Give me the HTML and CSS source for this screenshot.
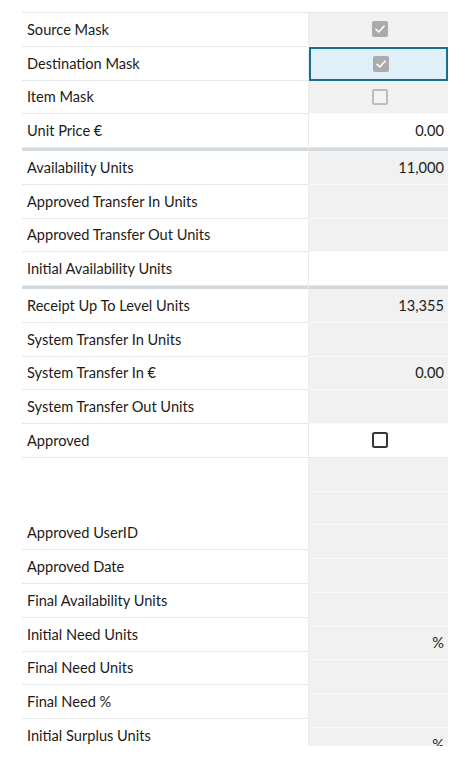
FILE: index.html
```html
<!DOCTYPE html>
<html>
<head>
<meta charset="utf-8">
<link rel="stylesheet" href="styles.css">
</head>
<body>
<div class="grid">
  <div class="col labels">
    <div class="row">Source Mask</div>
    <div class="row">Destination Mask</div>
    <div class="row">Item Mask</div>
    <div class="row">Unit Price €</div>
    <div class="sep"></div>
    <div class="row">Availability Units</div>
    <div class="row">Approved Transfer In Units</div>
    <div class="row">Approved Transfer Out Units</div>
    <div class="row">Initial Availability Units</div>
    <div class="sep"></div>
    <div class="row">Receipt Up To Level Units</div>
    <div class="row">System Transfer In Units</div>
    <div class="row">System Transfer In €</div>
    <div class="row">System Transfer Out Units</div>
    <div class="row">Approved</div>
    <div class="gap"></div>
    <div class="row">Approved UserID</div>
    <div class="row">Approved Date</div>
    <div class="row">Final Availability Units</div>
    <div class="row">Initial Need Units</div>
    <div class="row">Final Need Units</div>
    <div class="row">Final Need %</div>
    <div class="row">Initial Surplus Units</div>
  </div>
  <div class="col values">
    <div class="row cell ro center"><span class="cb checked"><svg viewBox="0 0 16 16" width="16" height="16"><path d="M4 8.3 L6.8 11 L12 5.2" fill="none" stroke="#fff" stroke-width="1.6" stroke-linecap="round" stroke-linejoin="round"/></svg></span></div>
    <div class="row cell selected center"><span class="cb checked"><svg viewBox="0 0 16 16" width="16" height="16"><path d="M4 8.3 L6.8 11 L12 5.2" fill="none" stroke="#fff" stroke-width="1.6" stroke-linecap="round" stroke-linejoin="round"/></svg></span></div>
    <div class="row cell ro center"><span class="cb disabled"></span></div>
    <div class="row cell edit">0.00</div>
    <div class="sep"></div>
    <div class="row cell ro">11,000</div>
    <div class="row cell ro"></div>
    <div class="row cell ro"></div>
    <div class="row cell edit"></div>
    <div class="sep"></div>
    <div class="row cell ro">13,355</div>
    <div class="row cell ro"></div>
    <div class="row cell ro">0.00</div>
    <div class="row cell ro"></div>
    <div class="row cell edit center"><span class="cb open"></span></div>
    <div class="row cell ro"></div>
    <div class="row cell ro"></div>
    <div class="row cell ro"></div>
    <div class="row cell ro"></div>
    <div class="row cell ro"></div>
    <div class="row cell ro">%</div>
    <div class="row cell ro"></div>
    <div class="row cell ro"></div>
    <div class="row cell ro">%</div>
  </div>
</div>
</body>
</html>
```
FILE: styles.css
```css
html, body {
  margin: 0;
  padding: 0;
  background: #ffffff;
}
body {
  font-family: Lato, "Noto Sans", sans-serif;
  font-size: 14.6px;
  color: #1c1b19;
}
.grid {
  display: flex;
  margin: 12px 0 0 22px;
  width: 426px;
  height: 733px;
  overflow: hidden;
  border-top: 1px solid #e8e8e8;
}
.col {
  display: flex;
  flex-direction: column;
  flex: none;
}
.labels {
  width: 286px;
}
.values {
  width: 140px;
  border-left: 1px solid #ebebeb;
  box-sizing: border-box;
}
.row {
  flex: none;
  height: 33.75px;
  box-sizing: border-box;
  border-bottom: 1px solid #e8e8e8;
  display: flex;
  align-items: center;
  padding: 0 5px;
  white-space: nowrap;
}
.cell {
  justify-content: flex-end;
  padding: 0 4px 0 4px;
}
.cell.center {
  justify-content: center;
}
.ro {
  background: #f1f1f1;
  border-bottom-color: #fafafa;
}
.edit {
  background: #ffffff;
}
.selected {
  background: #dff0f8;
  border: 2.5px solid #1a6e8c;
  padding-right: 2px;
}
.sep {
  flex: none;
  height: 3px;
  background: #d2dae0;
}
.gap {
  flex: none;
  height: 58.75px;
}
.cb {
  width: 16px;
  height: 16px;
  box-sizing: border-box;
  border-radius: 2px;
  display: block;
  margin-left: 2px;
}
.cb svg {
  display: block;
}
.cb.checked {
  background: #a9abad;
}
.cb.disabled {
  border: 2px solid #bdbdbd;
  background: #f3f3f3;
}
.cb.open {
  border: 2px solid #363636;
  border-radius: 2.5px;
  background: #fff;
}
```
